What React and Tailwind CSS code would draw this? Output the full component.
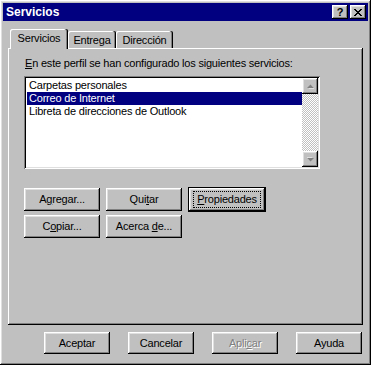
import React from 'react';

// Win95-style "Servicios" property sheet.
const raised =
  'shadow-[inset_-1px_-1px_#000,inset_1px_1px_#fff,inset_-2px_-2px_#808080,inset_2px_2px_#dfdfdf]';

const Btn = ({ children, className = '', disabled }) => (
  <button
    className={`relative flex items-center justify-center bg-[#c0c0c0] ${raised} ${
      disabled ? 'text-[#808080] [text-shadow:1px_1px_0_#fff]' : 'text-black'
    } ${className}`}
  >
    {children}
  </button>
);

const Key = ({ children }) => <u className="underline underline-offset-[1px]">{children}</u>;

const UpArrow = ({ down }) => (
  <svg width="7" height="5" viewBox="0 0 7 5" className={down ? 'rotate-180' : ''}>
    <polygon points="1,4 4,1 7,4 " fill="#fff" transform="translate(0.5,0.5)" />
    <polygon points="0,4 3.5,0.5 7,4" fill="#808080" />
  </svg>
);

const CloseGlyph = () => (
  <svg width="8" height="7" viewBox="0 0 8 7" shapeRendering="crispEdges">
    <path
      fill="#000"
      d="M0 0h2v1H0zM6 0h2v1H6zM1 1h2v1H1zM5 1h2v1H5zM2 2h4v1H2zM3 3h2v1H3zM2 4h4v1H2zM1 5h2v1H1zM5 5h2v1H5zM0 6h2v1H0zM6 6h2v1H6z"
    />
  </svg>
);

const items = ['Carpetas personales', 'Correo de Internet', 'Libreta de direcciones de Outlook'];

export default function App() {
  return (
    <div
      className={`flex h-[365px] w-[371px] flex-col bg-[#c0c0c0] p-[3px] text-[11px] tracking-[-0.2px] text-black ${raised}`}
      style={{ fontFamily: '"Liberation Sans", Arial, sans-serif' }}
    >
      {/* title bar */}
      <div className="flex h-[18px] items-center justify-between bg-[#000080] pl-[3px] pr-[2px]">
        <span className="text-[12px] font-bold leading-none tracking-normal text-white">Servicios</span>
        <div className="flex gap-[2px]">
          <div className={`flex h-[14px] w-[16px] items-center justify-center bg-[#c0c0c0] ${raised}`}>
            <span className="text-[11px] font-bold leading-none">?</span>
          </div>
          <div className={`flex h-[14px] w-[16px] items-center justify-center bg-[#c0c0c0] ${raised}`}>
            <CloseGlyph />
          </div>
        </div>
      </div>

      <div className="mx-[5px] mt-[8px] flex flex-col">
        {/* tabs */}
        <div className="relative z-10 flex h-[20px] items-start pl-[2px]">
          <div className="flex h-[20px] w-[58px] justify-center rounded-t-[2px] bg-[#c0c0c0] pt-[3px] leading-[13px] shadow-[inset_-1px_0_#000,inset_-2px_0_#808080,inset_1px_1px_#fff]">
            Servicios
          </div>
          <div className="mt-[2px] flex h-[17px] w-[48px] justify-center rounded-t-[2px] pt-[3px] leading-[13px] shadow-[inset_-1px_0_#000,inset_-2px_0_#808080,inset_1px_1px_#fff]">
            Entrega
          </div>
          <div className="mt-[2px] flex h-[17px] w-[57px] justify-center rounded-t-[2px] pt-[3px] leading-[13px] shadow-[inset_-1px_0_#000,inset_-2px_0_#808080,inset_1px_1px_#fff]">
            Dirección
          </div>
        </div>

        {/* panel */}
        <div className="-mt-[1px] flex h-[277px] flex-col pl-[16px] pt-[9px] shadow-[inset_-1px_-1px_#000,inset_1px_1px_#fff,inset_-2px_-2px_#808080]">
          <div className="pl-[1px] leading-[13px]">
            <Key>E</Key>n este perfil se han configurado los siguientes servicios:
          </div>

          <div className="mt-[6px] flex h-[93px] w-[296px] bg-white p-[2px] shadow-[inset_1px_1px_#808080,inset_-1px_-1px_#fff,inset_2px_2px_#000,inset_-2px_-2px_#dfdfdf]">
            <div className="flex-1 pl-[1px] pt-[1px]">
              {items.map((t, i) => (
                <div
                  key={t}
                  className={`h-[13px] pl-[2px] leading-[13px] ${
                    i === 1 ? 'bg-[#000080] text-white' : ''
                  }`}
                >
                  {t}
                </div>
              ))}
            </div>
            <div className="flex w-[16px] flex-col bg-[repeating-conic-gradient(#c0c0c0_0%_25%,#fff_0%_50%)] bg-[length:2px_2px]">
              <div className={`flex h-[16px] items-center justify-center bg-[#c0c0c0] ${raised}`}>
                <UpArrow />
              </div>
              <div className="flex-1" />
              <div className={`flex h-[16px] items-center justify-center bg-[#c0c0c0] ${raised}`}>
                <UpArrow down />
              </div>
            </div>
          </div>

          <div className="mt-[19px] flex h-[23px] items-center gap-[6px]">
            <Btn className="h-[23px] w-[76px]">
              <span>A<Key>g</Key>regar...</span>
            </Btn>
            <Btn className="h-[23px] w-[76px]">
              <span>Qui<Key>t</Key>ar</span>
            </Btn>
            <div className="h-[25px] w-[78px] border border-black">
              <Btn className="h-[23px] w-[76px]">
                <span className="absolute inset-x-[4px] inset-y-[3px] border border-dotted border-black" />
                <span><Key>P</Key>ropiedades</span>
              </Btn>
            </div>
          </div>
          <div className="mt-[4px] flex gap-[6px]">
            <Btn className="h-[23px] w-[76px]">
              <span>C<Key>o</Key>piar...</span>
            </Btn>
            <Btn className="h-[23px] w-[76px]">
              <span>Acerca <Key>d</Key>e...</span>
            </Btn>
          </div>
        </div>

        {/* bottom buttons */}
        <div className="mt-[7px] flex justify-end gap-[18px] pr-[1px]">
          <Btn className="h-[22px] w-[66px]">Aceptar</Btn>
          <Btn className="h-[22px] w-[66px]">Cancelar</Btn>
          <Btn className="h-[22px] w-[66px]" disabled>
            <span>Apli<Key>c</Key>ar</span>
          </Btn>
          <Btn className="h-[22px] w-[66px]">Ayuda</Btn>
        </div>
      </div>
    </div>
  );
}
